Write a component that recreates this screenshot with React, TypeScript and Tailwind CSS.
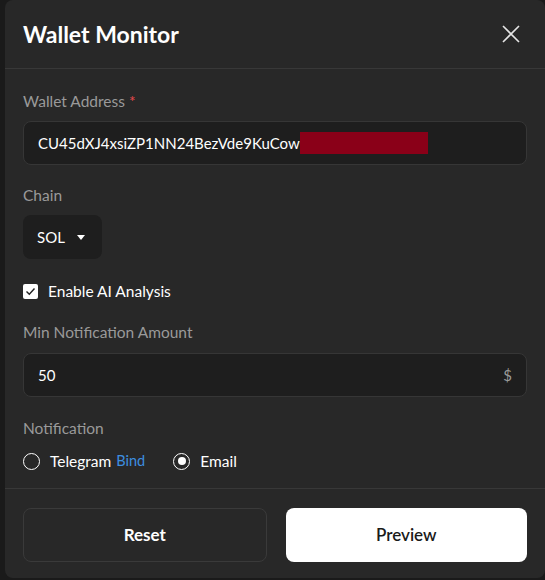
import { useState } from "react";

function CloseIcon() {
  return (
    <svg width="20" height="20" viewBox="0 0 20 20" fill="none" stroke="currentColor" strokeWidth="1.6">
      <path d="M2 2 L18 18 M18 2 L2 18" />
    </svg>
  );
}

export default function App() {
  const [channel, setChannel] = useState<"telegram" | "email">("email");
  const [ai, setAi] = useState(true);

  return (
    <div
      className="min-h-[580px] w-[545px] bg-[#1a1a1a] pl-[5px]"
      style={{ fontFamily: "Lato, 'Noto Sans', sans-serif" }}
    >
      <div className="flex h-[578px] w-[540px] flex-col rounded-lg bg-[#282828] text-white">
        <div className="flex h-[69px] items-center justify-between border-b border-[#383838] pl-[18px] pr-[24px]">
          <h2 className="text-[23px] font-bold">Wallet Monitor</h2>
          <button className="text-[#e5e5e5]">
            <CloseIcon />
          </button>
        </div>

        <div className="flex flex-1 flex-col px-[18px] pt-[22px]">
          <label className="text-[15.5px] leading-[20px] text-[#9a9a9a]">
            Wallet Address <span className="text-[#e5484d]">*</span>
          </label>
          <div className="mt-[10px] flex h-[44px] items-center rounded-lg border border-[#363636] bg-[#1e1e1e] px-[14px] text-[15px]">
            <span>CU45dXJ4xsiZP1NN24BezVde9KuCow</span>
            <span className="h-[22px] w-[128px] bg-[#8a0018]" />
          </div>

          <label className="mt-[20px] text-[15.5px] leading-[20px] text-[#9a9a9a]">Chain</label>
          <div className="mt-[10px] flex h-[44px] w-[79px] items-center gap-[12px] rounded-lg bg-[#1e1e1e] pl-[14px] text-[15px]">
            <span>SOL</span>
            <svg width="8" height="5" viewBox="0 0 8 5" fill="currentColor">
              <path d="M0 0 H8 L4 5 Z" />
            </svg>
          </div>

          <label className="mt-[22px] flex items-center gap-[10px] text-[15.5px] leading-[20px]">
            <button
              onClick={() => setAi(!ai)}
              className="flex h-[15px] w-[15px] items-center justify-center rounded-[2px] bg-white"
            >
              {ai && (
                <svg width="11" height="11" viewBox="0 0 11 11" fill="none" stroke="#222" strokeWidth="1.4">
                  <path d="M1.5 5.5 L4.3 8.3 L9.5 2.5" />
                </svg>
              )}
            </button>
            Enable AI Analysis
          </label>

          <label className="mt-[21px] text-[15.5px] leading-[20px] text-[#9a9a9a]">Min Notification Amount</label>
          <div className="mt-[11px] flex h-[44px] items-center justify-between rounded-lg border border-[#363636] bg-[#1e1e1e] px-[14px] text-[15px]">
            <span>50</span>
            <span className="text-[#9a9a9a]">$</span>
          </div>

          <label className="mt-[21px] text-[15.5px] leading-[20px] text-[#9a9a9a]">Notification</label>
          <div className="mt-[13px] flex items-center gap-[28px] text-[15.5px] leading-[20px]">
            <button onClick={() => setChannel("telegram")} className="flex items-center gap-[10px]">
              <span className="flex h-[17px] w-[17px] items-center justify-center rounded-full border-[1.5px] border-white">
                {channel === "telegram" && <span className="h-[8px] w-[8px] rounded-full bg-white" />}
              </span>
              <span>Telegram</span>
              <span className="-ml-[5px] text-[14.5px] text-[#3d8fe0]">Bind</span>
            </button>
            <button onClick={() => setChannel("email")} className="flex items-center gap-[10px]">
              <span className="flex h-[17px] w-[17px] items-center justify-center rounded-full border-[1.5px] border-white">
                {channel === "email" && <span className="h-[8px] w-[8px] rounded-full bg-white" />}
              </span>
              <span>Email</span>
            </button>
          </div>
        </div>

        <div className="flex gap-[19px] border-t border-[#383838] px-[18px] pb-[16px] pt-[19px]">
          <button className="h-[54px] flex-1 rounded-lg border border-[#3a3a3a] text-[17px] font-bold">
            Reset
          </button>
          <button className="h-[54px] flex-1 rounded-lg bg-white text-[17px] font-semibold text-[#1a1a1a]">
            Preview
          </button>
        </div>
      </div>
    </div>
  );
}
